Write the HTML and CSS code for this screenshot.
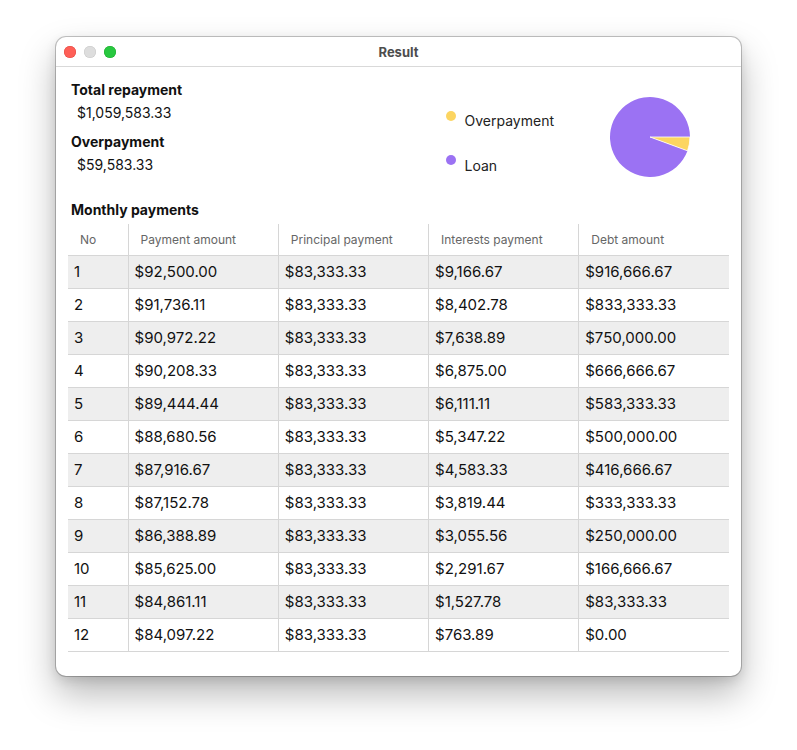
FILE: index.html
```html
<!DOCTYPE html>
<html>
<head>
<meta charset="utf-8">
<link rel="stylesheet" href="styles.css">
</head>
<body>
<div class="window">
  <div class="titlebar">
    <div class="lights">
      <span class="light red"></span>
      <span class="light gray"></span>
      <span class="light green"></span>
    </div>
    <div class="title">Result</div>
  </div>
  <div class="content">
    <div class="summary">
      <div class="figures">
        <div class="label">Total repayment</div>
        <div class="value">$1,059,583.33</div>
        <div class="label second">Overpayment</div>
        <div class="value">$59,583.33</div>
      </div>
      <div class="legend">
        <div class="legend-item"><span class="dot yellow"></span><span>Overpayment</span></div>
        <div class="legend-item"><span class="dot purple"></span><span>Loan</span></div>
      </div>
      <svg class="pie" width="80" height="80" viewBox="0 0 80 80">
        <path d="M40 40 L77.53 53.84 A40 40 0 1 1 80 40 Z" fill="#9b72f3"/>
        <path d="M40 40 L80 40 A40 40 0 0 1 77.53 53.84 Z" fill="#fcd561" stroke="#ffffff" stroke-width="0.8"/>
      </svg>
    </div>
    <div class="section-title">Monthly payments</div>
    <table class="payments">
      <colgroup>
        <col class="c-no"><col class="c-w"><col class="c-w"><col class="c-w"><col class="c-w">
      </colgroup>
      <thead>
        <tr><th>No</th><th>Payment amount</th><th>Principal payment</th><th>Interests payment</th><th>Debt amount</th></tr>
      </thead>
      <tbody>
        <tr class="odd"><td>1</td><td>$92,500.00</td><td>$83,333.33</td><td>$9,166.67</td><td>$916,666.67</td></tr>
        <tr><td>2</td><td>$91,736.11</td><td>$83,333.33</td><td>$8,402.78</td><td>$833,333.33</td></tr>
        <tr class="odd"><td>3</td><td>$90,972.22</td><td>$83,333.33</td><td>$7,638.89</td><td>$750,000.00</td></tr>
        <tr><td>4</td><td>$90,208.33</td><td>$83,333.33</td><td>$6,875.00</td><td>$666,666.67</td></tr>
        <tr class="odd"><td>5</td><td>$89,444.44</td><td>$83,333.33</td><td>$6,111.11</td><td>$583,333.33</td></tr>
        <tr><td>6</td><td>$88,680.56</td><td>$83,333.33</td><td>$5,347.22</td><td>$500,000.00</td></tr>
        <tr class="odd"><td>7</td><td>$87,916.67</td><td>$83,333.33</td><td>$4,583.33</td><td>$416,666.67</td></tr>
        <tr><td>8</td><td>$87,152.78</td><td>$83,333.33</td><td>$3,819.44</td><td>$333,333.33</td></tr>
        <tr class="odd"><td>9</td><td>$86,388.89</td><td>$83,333.33</td><td>$3,055.56</td><td>$250,000.00</td></tr>
        <tr><td>10</td><td>$85,625.00</td><td>$83,333.33</td><td>$2,291.67</td><td>$166,666.67</td></tr>
        <tr class="odd"><td>11</td><td>$84,861.11</td><td>$83,333.33</td><td>$1,527.78</td><td>$83,333.33</td></tr>
        <tr><td>12</td><td>$84,097.22</td><td>$83,333.33</td><td>$763.89</td><td>$0.00</td></tr>
      </tbody>
    </table>
  </div>
</div>
</body>
</html>
```
FILE: styles.css
```css
* { box-sizing: border-box; }
html, body { margin: 0; padding: 0; background: #ffffff; }
body {
  font-family: Inter, "Liberation Sans", sans-serif;
  color: #1d1d1f;
  width: 797px;
  height: 750px;
  overflow: hidden;
}
.window {
  margin: 37px 0 0 56px;
  width: 685px;
  height: 639px;
  background: #ffffff;
  border-radius: 10px;
  box-shadow: 0 0 0 1px rgba(0,0,0,0.22), 0 18px 36px rgba(0,0,0,0.28), 0 4px 12px rgba(0,0,0,0.12);
  overflow: hidden;
}
.titlebar {
  height: 30px;
  border-bottom: 1px solid #d9d9d9;
  display: flex;
  align-items: center;
  padding-left: 8px;
  position: relative;
}
.lights { display: flex; gap: 8px; }
.light {
  width: 12px; height: 12px; border-radius: 50%;
  display: block;
}
.red { background: #fe5f57; box-shadow: inset 0 0 0 0.5px #e2463f; }
.gray { background: #dddddd; box-shadow: inset 0 0 0 0.5px #c8c8c8; }
.green { background: #28c840; box-shadow: inset 0 0 0 0.5px #1aab29; }
.title {
  position: absolute;
  left: 0; right: 0; top: 0; bottom: 0;
  display: flex; align-items: center; justify-content: center;
  font-size: 13px; font-weight: 700; color: #4d4d4d;
  pointer-events: none;
}
.content { padding: 15px 12px 0 12px; }
.summary { display: flex; align-items: flex-start; }
.figures { flex: 1; padding-left: 3px; }
.label { font-size: 14px; font-weight: 700; line-height: 16px; color: #111; }
.label.second { margin-top: 11px; }
.value { font-size: 14px; line-height: 20px; margin-top: 5px; padding-left: 6px; color: #111; }
.legend { margin-top: 29px; }
.legend-item {
  display: flex; align-items: flex-start; gap: 9px;
  font-size: 14px; line-height: 20px; color: #222;
}
.legend-item + .legend-item { margin-top: 25px; }
.dot { width: 10px; height: 10px; border-radius: 50%; display: block; margin-left: 1px; }
.yellow { background: #fcd561; }
.purple { background: #9b72f3; margin-top: -1px; }
.pie { display: block; margin: 15px 39px 0 56px; }
.section-title {
  margin-top: 25px;
  font-size: 14px; font-weight: 700; line-height: 16px;
  padding-left: 3px; color: #111;
}
.payments {
  margin-top: 6px;
  width: 661px;
  border-collapse: collapse;
  table-layout: fixed;
}
.c-no { width: 60px; }
.c-w { width: 150px; }
.payments th {
  height: 31px;
  text-align: left;
  font-weight: 400;
  font-size: 12px;
  color: #666666;
  padding: 0 0 0 12px;
  border-bottom: 1px solid #d6d6d6;
}
.payments td {
  height: 33px;
  font-size: 15px;
  color: #111;
  padding: 0 0 1px 6px;
  border-bottom: 1px solid #d6d6d6;
}
.payments th + th, .payments td + td { border-left: 1px solid #d6d6d6; }
.payments tr.odd td { background: #eeeeee; }
```
